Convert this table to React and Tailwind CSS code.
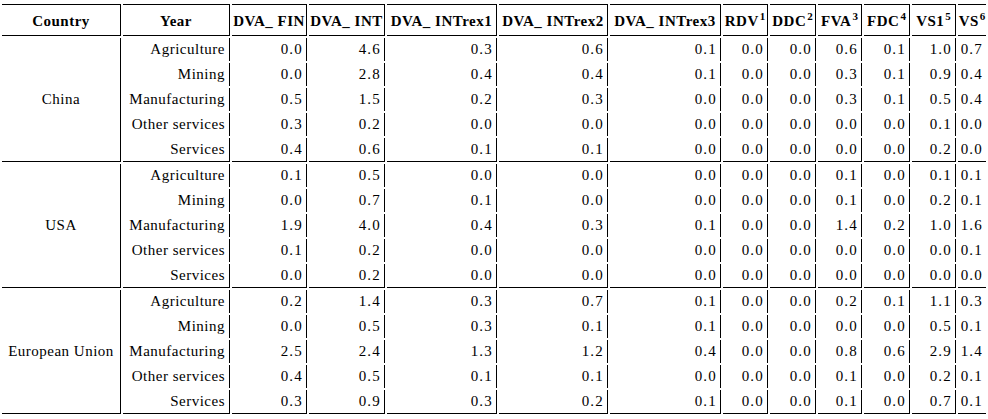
import React from "react";

const headers = [
  { t: "Country" },
  { t: "Year" },
  { t: "DVA_ FIN" },
  { t: "DVA_ INT" },
  { t: "DVA_ INTrex1" },
  { t: "DVA_ INTrex2" },
  { t: "DVA_ INTrex3" },
  { t: "RDV", s: "1" },
  { t: "DDC", s: "2" },
  { t: "FVA", s: "3" },
  { t: "FDC", s: "4" },
  { t: "VS1", s: "5" },
  { t: "VS", s: "6" },
];

const groups = [
  {
    country: "China",
    rows: [
      ["Agriculture", "0.0", "4.6", "0.3", "0.6", "0.1", "0.0", "0.0", "0.6", "0.1", "1.0", "0.7"],
      ["Mining", "0.0", "2.8", "0.4", "0.4", "0.1", "0.0", "0.0", "0.3", "0.1", "0.9", "0.4"],
      ["Manufacturing", "0.5", "1.5", "0.2", "0.3", "0.0", "0.0", "0.0", "0.3", "0.1", "0.5", "0.4"],
      ["Other services", "0.3", "0.2", "0.0", "0.0", "0.0", "0.0", "0.0", "0.0", "0.0", "0.1", "0.0"],
      ["Services", "0.4", "0.6", "0.1", "0.1", "0.0", "0.0", "0.0", "0.0", "0.0", "0.2", "0.0"],
    ],
  },
  {
    country: "USA",
    rows: [
      ["Agriculture", "0.1", "0.5", "0.0", "0.0", "0.0", "0.0", "0.0", "0.1", "0.0", "0.1", "0.1"],
      ["Mining", "0.0", "0.7", "0.1", "0.0", "0.0", "0.0", "0.0", "0.1", "0.0", "0.2", "0.1"],
      ["Manufacturing", "1.9", "4.0", "0.4", "0.3", "0.1", "0.0", "0.0", "1.4", "0.2", "1.0", "1.6"],
      ["Other services", "0.1", "0.2", "0.0", "0.0", "0.0", "0.0", "0.0", "0.0", "0.0", "0.0", "0.1"],
      ["Services", "0.0", "0.2", "0.0", "0.0", "0.0", "0.0", "0.0", "0.0", "0.0", "0.0", "0.0"],
    ],
  },
  {
    country: "European Union",
    rows: [
      ["Agriculture", "0.2", "1.4", "0.3", "0.7", "0.1", "0.0", "0.0", "0.2", "0.1", "1.1", "0.3"],
      ["Mining", "0.0", "0.5", "0.3", "0.1", "0.1", "0.0", "0.0", "0.0", "0.0", "0.5", "0.1"],
      ["Manufacturing", "2.5", "2.4", "1.3", "1.2", "0.4", "0.0", "0.0", "0.8", "0.6", "2.9", "1.4"],
      ["Other services", "0.4", "0.5", "0.1", "0.1", "0.0", "0.0", "0.0", "0.1", "0.0", "0.2", "0.1"],
      ["Services", "0.3", "0.9", "0.3", "0.2", "0.1", "0.0", "0.0", "0.1", "0.0", "0.7", "0.1"],
    ],
  },
];

export default function App() {
  return (
    <div
      className="w-[988px] h-[419px] bg-white text-black overflow-hidden"
      style={{ fontFamily: '"Liberation Serif", serif' }}
    >
      <div className="grid grid-cols-[119px_107px_75px_76px_110px_109px_111px_45px_46px_44px_46px_44px_28px] gap-[2px] pl-[2px] pt-[4px] text-[15px] tracking-[0.5px] leading-none">
        {headers.map((h, i) => (
          <div
            key={i}
            className={
              "h-[32px] flex items-center justify-center font-bold border-t border-b border-black whitespace-nowrap " +
              (i < headers.length - 1 ? "border-r" : "")
            }
          >
            <span className="pt-[2px]">
              {h.t}
              {h.s && <sup className="text-[11px] tracking-normal ml-[1px]">{h.s}</sup>}
            </span>
          </div>
        ))}
        {groups.map((g, gi) => (
          <React.Fragment key={gi}>
            <div className="row-span-5 flex items-center justify-center border-r border-b border-black whitespace-nowrap">
              {g.country}
            </div>
            {g.rows.map((r, ri) => {
              const last = ri === g.rows.length - 1;
              return r.map((v, ci) => (
                <div
                  key={ri + "-" + ci}
                  className={
                    "flex items-center justify-end whitespace-nowrap border-black " +
                    (ci === 0 ? "pr-[4px] " : "pr-[3px] tracking-[1.2px] ") +
                    (last ? "h-[24px] border-b " : "h-[23px] ") +
                    (ci < r.length - 1 ? "border-r" : "")
                  }
                >
                  {v}
                </div>
              ));
            })}
          </React.Fragment>
        ))}
      </div>
    </div>
  );
}
